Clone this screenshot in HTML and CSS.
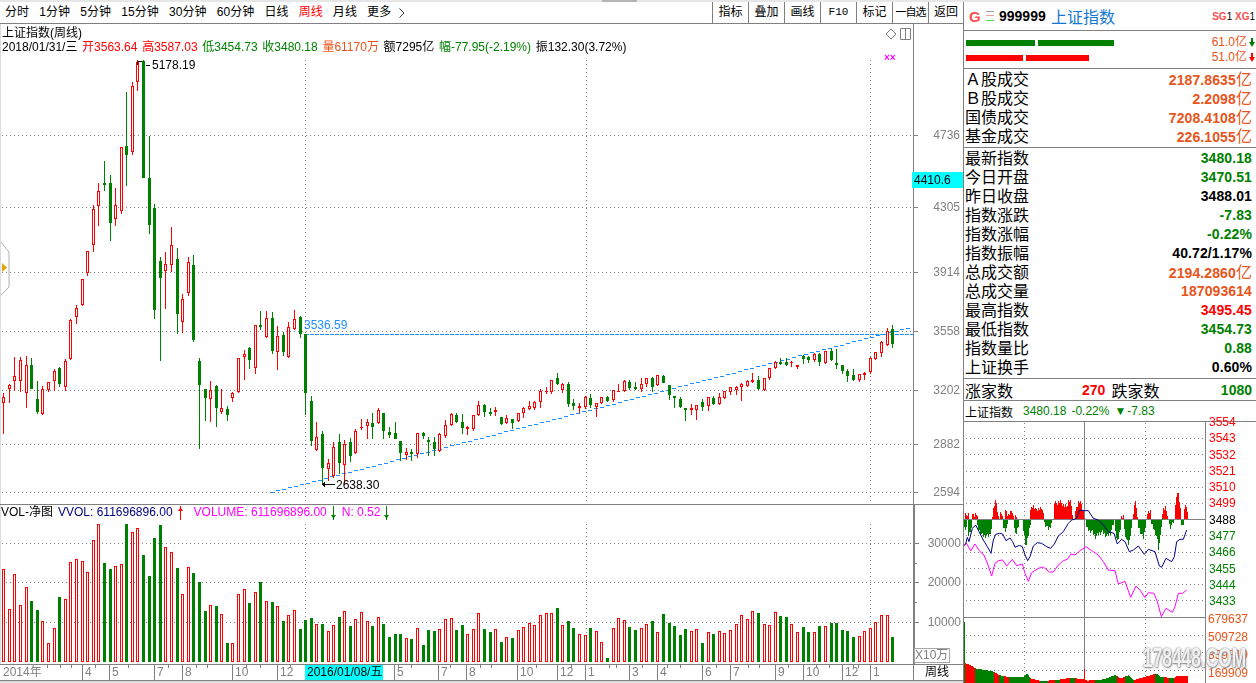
FILE: index.html
```html
<!DOCTYPE html>
<html>
<head>
    <title>上证指数 周线</title>
    <link rel="stylesheet" href="styles.css">
</head>
<body>
    <div class="app">
        <div class="top-thumb"></div>

        <div class="left">
            <div class="toolbar">
                <div class="periods">
                    <span>分时</span>
                    <span>1分钟</span>
                    <span>5分钟</span>
                    <span>15分钟</span>
                    <span>30分钟</span>
                    <span>60分钟</span>
                    <span>日线</span>
                    <span class="active">周线</span>
                    <span>月线</span>
                    <span>更多</span>
                    <svg class="more-arrow" width="6" height="10" viewBox="0 0 6 10"><path d="M0.5 0.5L5 5L0.5 9.5" /></svg>
                </div>
                <div class="tools">
                    <span class="tool">指标</span>
                    <span class="tool">叠加</span>
                    <span class="tool">画线</span>
                    <span class="tool tool-mono">F10</span>
                    <span class="tool">标记</span>
                    <span class="tool tool-tight">一自选</span>
                    <span class="tool">返回</span>
                </div>
            </div>

            <div class="pane price-pane">
                <canvas id="priceCanvas" width="963" height="480"></canvas>
                <div class="chart-head">
                    <div>上证指数(周线)</div>
                    <div class="quote">
                        <span>2018/01/31/三</span>
                        <span class="red">开3563.64</span>
                        <span class="red">高3587.03</span>
                        <span class="green">低3454.73</span>
                        <span class="green">收3480.18</span>
                        <span class="orange">量61170万</span>
                        <span>额7295亿</span>
                        <span class="green">幅-77.95(-2.19%)</span>
                        <span>振132.30(3.72%)</span>
                    </div>
                </div>
                <svg class="mark-diamond" width="12" height="12" viewBox="0 0 12 12"><path d="M6 1L11 6L6 11L1 6Z" /></svg>
                <svg class="mark-split" width="11" height="12" viewBox="0 0 11 12"><path d="M0.5 0.5H10.5V11.5H0.5ZM5.5 0.5V11.5" /></svg>
                <span class="mark-cross">××</span>
                <span class="note note-high" style="left:152px;top:34px">5178.19</span>
                <span class="note" style="left:336px;top:454px">2638.30</span>
                <span class="note note-blue" style="left:304px;top:294px">3536.59</span>
                <span class="axis-label" style="top:104px">4736</span>
                <span class="axis-label" style="top:176px">4305</span>
                <span class="axis-label" style="top:241px">3914</span>
                <span class="axis-label" style="top:300px">3558</span>
                <span class="axis-label" style="top:359px">3202</span>
                <span class="axis-label" style="top:413px">2882</span>
                <span class="axis-label" style="top:461px">2594</span>
                <span class="cursor-price">4410.6</span>
            </div>

            <div class="pane vol-pane">
                <canvas id="volCanvas" width="963" height="159"></canvas>
                <div class="vol-head">
                    <span class="vol-name">VOL-净图</span>
                    <span class="navy">VVOL: 611696896.00</span>
                    <svg class="arrow arrow-a" width="5" height="14" viewBox="0 0 5 14"><path class="fill-red" d="M2 0H3V2L5 5H3V14H2V5H0L2 2Z" /></svg>
                    <span class="magenta vol-b">VOLUME: 611696896.00</span>
                    <svg class="arrow arrow-b" width="5" height="14" viewBox="0 0 5 14"><path class="fill-green" d="M2 0H3V9H5L3 12V14H2V12L0 9H2Z" /></svg>
                    <span class="magenta vol-c">N: 0.52</span>
                    <svg class="arrow arrow-b" width="5" height="14" viewBox="0 0 5 14"><path class="fill-green" d="M2 0H3V9H5L3 12V14H2V12L0 9H2Z" /></svg>
                </div>
                <span class="axis-label vol-label" style="top:31px">30000</span>
                <span class="axis-label vol-label" style="top:70px">20000</span>
                <span class="axis-label vol-label" style="top:110px">10000</span>
                <span class="unit-box">X10万</span>
            </div>

            <div class="time-axis" id="timeAxis">
                <span class="tick tick-first">2014年</span>
                <span class="tick" style="left:82px">4</span>
                <span class="tick" style="left:109px">5</span>
                <span class="tick" style="left:154px">7</span>
                <span class="tick" style="left:182px">8</span>
                <span class="tick" style="left:232px">10</span>
                <span class="tick" style="left:277px">12</span>
                <span class="tick" style="left:394px">5</span>
                <span class="tick" style="left:438px">7</span>
                <span class="tick" style="left:466px">8</span>
                <span class="tick" style="left:517px">10</span>
                <span class="tick" style="left:557px">12</span>
                <span class="tick" style="left:585px">1</span>
                <span class="tick" style="left:629px">3</span>
                <span class="tick" style="left:657px">4</span>
                <span class="tick" style="left:702px">6</span>
                <span class="tick" style="left:730px">7</span>
                <span class="tick" style="left:775px">9</span>
                <span class="tick" style="left:803px">10</span>
                <span class="tick" style="left:842px">12</span>
                <span class="tick" style="left:870px">1</span>
                <span class="cursor-date">2016/01/08/五</span>
                <span class="tick tick-period">周线</span>
            </div>
            <div class="bottom-tabs"></div>
        </div>

        <div class="side">
            <div class="side-head">
                <span class="logo-g">G</span>
                <svg class="logo-lines" width="8" height="10" viewBox="0 0 8 10">
                    <rect class="line-gray" x="0" y="0" width="8" height="1" />
                    <rect class="line-pink" x="0" y="4" width="8" height="1" />
                    <rect class="line-lime" x="0" y="9" width="8" height="1" />
                </svg>
                <span class="code">999999</span>
                <span class="index-name">上证指数</span>
                <span class="flags"><b>SG</b>1 <b>XG</b>1</span>
            </div>

            <div class="flow-bars">
                <div class="flow-row">
                    <div class="bar bar-green bar-a"></div>
                    <div class="bar bar-green bar-b"></div>
                    <span class="flow-value">61.0亿</span>
                    <svg class="flow-arrow" width="6" height="9" viewBox="0 0 6 9"><path class="fill-green" d="M2 0H4V4H6L3 9L0 4H2Z" /></svg>
                </div>
                <div class="flow-row">
                    <div class="bar bar-red bar-c"></div>
                    <div class="bar bar-red bar-d"></div>
                    <span class="flow-value">51.0亿</span>
                    <svg class="flow-arrow" width="6" height="9" viewBox="0 0 6 9"><path class="fill-red" d="M2 0H4V4H6L3 9L0 4H2Z" /></svg>
                </div>
            </div>

            <div class="stats">
                <div class="stat"><span>Ａ股成交</span><b class="orange">2187.8635<i>亿</i></b></div>
                <div class="stat"><span>Ｂ股成交</span><b class="orange">2.2098<i>亿</i></b></div>
                <div class="stat"><span>国债成交</span><b class="orange">7208.4108<i>亿</i></b></div>
                <div class="stat"><span>基金成交</span><b class="orange">226.1055<i>亿</i></b></div>
            </div>

            <div class="stats stats-long">
                <div class="stat"><span>最新指数</span><b class="green">3480.18</b></div>
                <div class="stat"><span>今日开盘</span><b class="green">3470.51</b></div>
                <div class="stat"><span>昨日收盘</span><b>3488.01</b></div>
                <div class="stat"><span>指数涨跌</span><b class="green">-7.83</b></div>
                <div class="stat"><span>指数涨幅</span><b class="green">-0.22%</b></div>
                <div class="stat"><span>指数振幅</span><b>40.72/1.17%</b></div>
                <div class="stat"><span>总成交额</span><b class="orange">2194.2860<i>亿</i></b></div>
                <div class="stat"><span>总成交量</span><b class="orange">187093614</b></div>
                <div class="stat"><span>最高指数</span><b class="red">3495.45</b></div>
                <div class="stat"><span>最低指数</span><b class="green">3454.73</b></div>
                <div class="stat"><span>指数量比</span><b class="green">0.88</b></div>
                <div class="stat"><span>上证换手</span><b>0.60%</b></div>
            </div>

            <div class="breadth">
                <span>涨家数</span>
                <b class="red breadth-up">270</b>
                <span class="breadth-down">跌家数</span>
                <b class="green breadth-num">1080</b>
            </div>

            <div class="mini-head">
                <span>上证指数</span>
                <span class="green mini-price">3480.18</span>
                <span class="green">-0.22%</span>
                <span class="green"><i class="mini-tri">▼</i>-7.83</span>
            </div>

            <div class="mini">
                <canvas id="miniCanvas" width="292" height="261"></canvas>
                <div class="mini-scale">
                    <span class="red">3554</span>
                    <span class="red">3543</span>
                    <span class="red">3532</span>
                    <span class="red">3521</span>
                    <span class="red">3510</span>
                    <span class="red">3499</span>
                    <span>3488</span>
                    <span class="green">3477</span>
                    <span class="green">3466</span>
                    <span class="green">3455</span>
                    <span class="green">3444</span>
                    <span class="green">3433</span>
                    <span class="orange vol-step">679637</span>
                    <span class="orange vol-step">509728</span>
                    <span class="orange vol-step">339819</span>
                    <span class="orange vol-step">169909</span>
                </div>
                <span class="watermark">178448.COM</span>
            </div>
        </div>
    </div>

    <script src="chart.js"></script>
</body>
</html>
```
FILE: styles.css
```css
* {
    box-sizing: border-box;
}
html, body {
    margin: 0;
    height: 683px;
    overflow: hidden;
    background: white;
}
body {
    font-family: "Liberation Sans", "Noto Sans CJK SC", sans-serif;
    font-size: 12px;
    color: #000;
}
canvas {
    display: block;
}
.red { color: #ff0000; }
.green { color: #008000; }
.orange { color: #e8541a; }
.navy { color: #000080; }
.magenta { color: #ff00ff; }
.fill-red { fill: #ff0000; }
.fill-green { fill: #008000; }

.app {
    position: relative;
    display: flex;
    height: 683px;
    border-top: 2px solid #e6e6e6;
}
.top-thumb {
    position: absolute;
    top: -2px;
    left: 602px;
    width: 35px;
    height: 2px;
    background: #b4b4b4;
}
.left {
    width: 963px;
    flex: none;
}

/* toolbar */
.toolbar {
    display: flex;
    justify-content: space-between;
    height: 22px;
    line-height: 21px;
    border-bottom: 1px solid #808080;
}
.periods {
    display: flex;
    align-items: center;
    gap: 10px;
    padding-left: 5px;
    letter-spacing: 0.1px;
}
.periods .active {
    color: #ff0000;
}
.more-arrow {
    margin-left: -2px;
}
.more-arrow path {
    fill: none;
    stroke: #333;
}
.tools {
    display: flex;
}
.tool {
    width: 36px;
    border-left: 1px solid #808080;
    text-align: center;
    white-space: nowrap;
}
.tool:last-child {
    width: 35px;
}
.tool-mono {
    font-family: "Liberation Mono", monospace;
    font-size: 11px;
}
.tool-tight {
    font-size: 11px;
    letter-spacing: -1px;
}

/* chart panes */
.pane {
    position: relative;
    border-bottom: 1px solid #808080;
}
.price-pane {
    height: 481px;
}
.vol-pane {
    height: 160px;
}
.chart-head {
    position: absolute;
    top: 2px;
    left: 2px;
    line-height: 14px;
}
.quote {
    display: flex;
    gap: 4.7px;
    white-space: nowrap;
}
.mark-diamond {
    position: absolute;
    top: 4px;
    left: 885px;
}
.mark-diamond path,
.mark-split path {
    fill: none;
    stroke: #808080;
}
.mark-split {
    position: absolute;
    top: 4px;
    left: 900px;
}
.mark-cross {
    position: absolute;
    top: 28px;
    left: 884px;
    color: #ff00ff;
    font-size: 10px;
    font-weight: bold;
    line-height: 12px;
}
.note {
    position: absolute;
    line-height: 14px;
}
.note-blue {
    color: #1e8fff;
}
.axis-label {
    position: absolute;
    right: 3px;
    color: #808080;
    line-height: 14px;
}
.vol-label {
    right: 2px;
}
.cursor-price {
    position: absolute;
    top: 148px;
    left: 912px;
    width: 51px;
    height: 16px;
    padding-left: 2px;
    background: #00ffff;
    line-height: 16px;
}
.vol-head {
    position: absolute;
    top: 0;
    left: 1px;
    display: flex;
    height: 15px;
    line-height: 15px;
    white-space: nowrap;
}
.vol-name {
    margin-right: 5px;
}
.arrow {
    flex: none;
    margin-top: 1px;
}
.arrow-a {
    margin-left: 5px;
}
.arrow-b {
    margin-left: 4px;
}
.vol-b {
    margin-left: 11px;
}
.vol-c {
    margin-left: 6px;
}
.unit-box {
    position: absolute;
    top: 143px;
    left: 914px;
    width: 36px;
    height: 15px;
    border: 1px solid #a8a8a8;
    color: #808080;
    line-height: 13px;
    white-space: nowrap;
}

/* time axis */
.time-axis {
    position: relative;
    height: 16px;
    border-bottom: 1px solid #808080;
    line-height: 15px;
    color: #808080;
    overflow: hidden;
}
.tick {
    position: absolute;
    top: 0;
    height: 15px;
    padding-left: 2px;
    border-left: 1px solid #808080;
}
.tick-first {
    left: 1px;
    border-left: none;
}
.tick-period {
    left: 913px;
    width: 50px;
    padding-left: 11px;
    color: #000;
    background: white;
}
.minor {
    position: absolute;
    top: 0;
    width: 1px;
    height: 3px;
    background: #808080;
}
.cursor-date {
    position: absolute;
    top: 0;
    left: 305px;
    width: 78px;
    height: 15px;
    padding-left: 2px;
    background: #00ffff;
    color: #000;
}
.bottom-tabs {
    height: 2px;
    background: #dcdcdc;
}

/* right panel */
.side {
    flex: none;
    width: 293px;
    border-left: 1px solid #808080;
}
.side-head {
    position: relative;
    display: flex;
    align-items: center;
    height: 29px;
    padding-left: 5px;
    border-bottom: 1px solid #808080;
}
.logo-g {
    width: 17px;
    color: #f85050;
    font-size: 15px;
    font-weight: bold;
}
.logo-lines {
    margin-right: 5px;
}
.line-gray { fill: #a0a0a0; }
.line-pink { fill: #f0a0a0; }
.line-lime { fill: #40e040; }
.code {
    width: 52px;
    font-size: 14px;
    font-weight: bold;
}
.index-name {
    color: #1478d2;
    font-size: 16px;
}
.flags {
    position: absolute;
    top: 9px;
    right: 1px;
    font-size: 10px;
    line-height: 12px;
}
.flags b {
    color: #f85050;
}
.flow-bars {
    height: 38px;
    padding-top: 4px;
    border-bottom: 1px solid #808080;
}
.flow-row {
    display: flex;
    align-items: center;
    gap: 3px;
    height: 15px;
    padding-left: 2px;
    padding-right: 1px;
}
.bar {
    height: 6px;
}
.bar-green { background: #008000; }
.bar-red { background: #ff0000; }
.bar-a { width: 69px; }
.bar-b { width: 76px; }
.bar-c { width: 57px; }
.bar-d { width: 63px; }
.flow-value {
    margin-left: auto;
    color: #e8541a;
    line-height: 15px;
}
.flow-arrow {
    margin-left: -1px;
}
.stats {
    padding: 1px 4px 1px 1px;
    border-bottom: 1px solid #808080;
}
.stats-long {
    height: 231px;
}
.stat {
    display: flex;
    justify-content: space-between;
    height: 19px;
    font-size: 16px;
    line-height: 19px;
    white-space: nowrap;
}
.stat b {
    font-size: 14px;
    letter-spacing: 0.1px;
}
.stat i {
    font-size: 16px;
    font-style: normal;
    font-weight: normal;
}
.breadth {
    display: flex;
    align-items: center;
    height: 22px;
    padding: 0 4px 0 1px;
    border-bottom: 1px solid #808080;
    font-size: 16px;
}
.breadth b {
    font-size: 14px;
}
.breadth-up {
    margin-left: 69px;
}
.breadth-down {
    margin-left: 6px;
}
.breadth-num {
    margin-left: auto;
}
.mini-head {
    display: flex;
    align-items: center;
    gap: 5px;
    height: 21px;
    padding-left: 1px;
    border-bottom: 1px solid #808080;
}
.mini-price {
    margin-left: 5px;
}
.mini-tri {
    margin-right: 1px;
    font-size: 12px;
    font-style: normal;
}
.mini {
    position: relative;
    height: 261px;
}
.mini-scale {
    position: absolute;
    top: -8px;
    left: 245px;
    display: flex;
    flex-direction: column;
}
.mini-scale span {
    height: 16.3px;
    line-height: 16.3px;
}
.mini-scale .vol-step {
    height: 18px;
    line-height: 18px;
    margin-left: -1px;
}
.watermark {
    position: absolute;
    top: 222px;
    left: 179px;
    color: rgba(248, 248, 248, 0.92);
    font-size: 28px;
    font-weight: bold;
    line-height: 28px;
    white-space: nowrap;
    transform: scaleX(0.62);
    transform-origin: left top;
    text-shadow: 1px 1px 2px #8a8a8a, -1px 0 2px #b0b0b0, 0 0 3px #a0a0a0;
}
```
FILE: chart.js
```js
// Weekly candles: [high, body top, body bottom, low, up], values are screen y
const candles = [
    [393,397,403,433,1],[384,385,389,402,1],[357,376,381,390,1],[357,360,381,391,1],[356,365,393,407,1],
    [358,365,388,388,0],[381,399,411,413,0],[386,389,414,414,1],[382,382,390,391,1],[369,371,381,390,1],
    [367,368,383,386,0],[359,361,387,390,1],[319,320,359,359,1],[305,308,317,323,1],[279,279,305,305,1],
    [251,251,273,275,1],[205,209,245,251,1],[183,191,206,225,1],[161,183,184,190,0],[175,183,222,240,0],
    [188,205,219,225,1],[147,147,211,213,1],[92,146,154,185,0],[82,86,152,154,1],[60,62,82,90,1],
    [60,61,177,177,0],[136,178,224,233,0],[204,208,309,318,0],[257,261,277,360,0],[252,264,271,308,1],
    [227,245,265,271,1],[248,259,313,333,0],[294,299,322,332,1],[257,262,293,295,1],[255,265,339,341,0],
    [358,361,384,448,0],[389,389,397,420,0],[381,390,399,421,1],[385,386,407,426,0],[389,408,412,413,1],
    [406,409,414,420,0],[392,393,398,401,1],[358,358,392,392,1],[350,354,357,379,1],[347,348,359,368,0],
    [325,325,368,373,1],[311,325,326,329,0],[311,318,337,337,1],[312,318,350,353,0],[326,336,352,369,1],
    [332,335,351,355,0],[322,327,357,357,1],[310,319,329,329,1],[316,317,333,337,0],[334,334,392,414,0],
    [396,401,440,445,0],[422,437,450,450,1],[431,434,467,483,0],[459,463,469,480,1],[442,447,476,477,1],
    [434,442,462,473,0],[440,444,465,483,1],[438,442,455,461,0],[429,431,453,453,1],[419,427,428,429,1],
    [419,422,426,438,1],[413,423,426,438,0],[408,410,423,423,1],[413,413,430,438,0],[427,432,434,437,0],
    [422,433,438,438,0],[441,441,452,460,0],[448,452,455,459,1],[449,452,453,460,0],[433,433,454,457,1],
    [432,433,435,438,0],[437,440,441,455,0],[437,442,448,455,0],[433,434,451,451,1],[420,425,436,437,1],
    [413,414,425,425,1],[413,415,421,422,0],[414,422,427,433,0],[426,427,429,434,1],[415,415,429,430,1],
    [401,405,415,415,1],[404,405,411,416,0],[408,412,413,415,0],[407,410,412,415,1],[417,417,423,424,0],
    [415,418,423,423,1],[419,419,422,428,0],[413,413,421,421,1],[407,408,413,417,1],[401,406,409,409,1],
    [401,402,408,409,1],[389,391,402,407,1],[387,391,392,393,1],[380,380,392,393,1],[373,378,383,384,0],
    [383,384,390,392,1],[382,384,403,406,0],[399,403,405,409,0],[403,406,408,412,1],[396,397,407,408,1],
    [394,398,404,407,0],[403,403,407,416,1],[397,397,403,403,1],[396,397,400,401,0],[390,390,400,401,1],
    [384,391,391,391,1],[380,381,391,391,1],[380,382,387,389,0],[382,387,388,389,0],[378,384,389,391,1],
    [378,378,384,386,1],[377,378,386,391,0],[375,375,385,385,1],[375,376,382,382,0],[385,385,394,399,0],
    [396,396,397,407,0],[397,399,406,407,0],[408,408,409,420,0],[404,408,410,414,1],[405,405,410,419,1],
    [399,402,406,410,0],[397,397,406,410,1],[396,398,403,404,0],[393,397,404,404,1],[391,391,398,398,1],
    [387,387,392,394,1],[386,387,390,394,1],[383,384,387,400,1],[380,381,386,386,1],[373,380,382,382,1],
    [376,380,388,389,0],[378,378,390,390,1],[368,368,378,379,1],[361,362,368,368,1],[358,362,363,364,0],
    [358,362,364,365,0],[361,362,363,366,1],[365,365,367,368,1],[355,356,358,363,0],[356,357,359,362,0],
    [353,354,360,361,1],[353,354,361,365,0],[351,351,363,363,1],[348,351,359,360,0],[349,363,363,368,0],
    [365,365,370,373,0],[369,371,375,381,0],[369,375,379,380,0],[374,374,380,381,1],[372,373,375,379,1],
    [357,358,372,373,1],[352,352,359,359,1],[341,342,353,356,1],[328,331,345,345,1],[325,329,343,347,0]
];

// Volume bar tops, measured in thirds of a pixel below y=495
const volTops = [
    223,343,238,331,277,318,345,379,445,400,306,313,202,193,199,232,136,88,204,222,
    214,208,88,112,100,181,243,129,90,157,172,219,298,217,234,262,348,331,333,358,
    445,445,298,283,324,292,262,319,322,334,378,361,346,402,375,369,388,387,409,391,
    366,349,393,373,352,379,393,367,387,426,417,417,430,432,400,450,405,408,403,373,
    370,405,390,418,403,355,402,411,403,441,427,429,406,397,385,390,361,355,355,339,
    391,378,399,418,421,399,409,441,489,400,370,376,396,405,400,388,378,412,357,384,
    393,420,402,409,403,444,412,417,409,415,406,388,361,373,349,354,388,391,352,363,
    366,388,412,396,411,411,393,394,384,384,405,408,426,424,409,400,382,361,361,426
];
const volUp = "1111100111" + "0111111100" + "1101100001" + "1011000101" + "0111010101" +
    "0110001011" + "0101110100" + "0010100011" + "1001110010" + "1011111110" +
    "1001101101" + "1100110100" + "0001101011" + "1111101110" + "0110010100" + "0001111110";

const GRAY = "#808080";
const RED = "#ff0000";
const GREEN = "#008000";
const BLUE = "#1e8fff";

function barX(i) {
    return Math.round(3.3 + 5.59 * i);
}

function rect(ctx, x, y, w, h, color) {
    ctx.fillStyle = color;
    ctx.fillRect(x, y, w, h);
}

function dottedH(ctx, y, x1, x2) {
    for (let x = x1; x < x2; x += 4) rect(ctx, x, y, 1, 1, GRAY);
}

function dottedV(ctx, x, y1, y2) {
    for (let y = y1; y < y2; y += 4) rect(ctx, x, y, 1, 1, GRAY);
}

function drawPrice() {
    const ctx = document.getElementById("priceCanvas").getContext("2d");
    ctx.translate(0, -24);
    rect(ctx, 0, 24, 1, 480, "#dcdcdc");

    [135, 207, 272, 331, 390, 444, 492].forEach(y => {
        dottedH(ctx, y, 2, 913);
        rect(ctx, 913, y, 5, 1, GRAY);
    });
    [305, 586, 870].forEach(x => dottedV(ctx, x, 60, 504));
    rect(ctx, 913, 24, 1, 480, GRAY);

    // slanted trend line: short flat dashes stepping upwards
    for (let x = 270; x < 910; x += 6) {
        rect(ctx, x, Math.round(492 - (x - 270) * 0.2586), 4, 1, BLUE);
    }
    // level line
    for (let x = 305; x < 913; x += 5) {
        rect(ctx, x, 334, 4, 1, BLUE);
    }

    candles.forEach((c, i) => {
        const x = barX(i);
        const color = c[4] ? RED : GREEN;
        rect(ctx, x, c[0], 1, c[3] - c[0] + 1, color);
        rect(ctx, x - 1, c[1], 3, Math.max(c[2] - c[1], 1) + (c[4] ? 0 : 1), color);
        if (c[4] && c[2] - c[1] > 1) rect(ctx, x, c[1] + 1, 1, c[2] - c[1] - 2, "white");
    });

    // high and low markers
    rect(ctx, 146, 65, 4, 1, "#000");
    rect(ctx, 322, 484, 13, 1, "#000");
    rect(ctx, 323, 483, 1, 3, "#000");
    rect(ctx, 324, 482, 1, 5, "#000");
    rect(ctx, 138, 61, 4, 1, "#000");
    rect(ctx, 137, 62, 1, 3, "#000");

    // collapse handle on the left edge
    ctx.strokeStyle = "#b0b0b0";
    ctx.beginPath();
    ctx.moveTo(1, 242);
    ctx.lineTo(9, 252);
    ctx.lineTo(9, 287);
    ctx.lineTo(1, 295);
    ctx.stroke();
    ctx.fillStyle = "#e8a010";
    ctx.beginPath();
    ctx.moveTo(2, 263);
    ctx.lineTo(7, 267.5);
    ctx.lineTo(2, 272);
    ctx.fill();
}

function drawVolume() {
    const ctx = document.getElementById("volCanvas").getContext("2d");
    ctx.translate(0, -505);
    rect(ctx, 0, 505, 1, 159, "#dcdcdc");

    [543, 582, 622].forEach(y => {
        dottedH(ctx, y, 2, 913);
        rect(ctx, 913, y, 6, 1, GRAY);
    });
    [563, 602].forEach(y => rect(ctx, 913, y, 4, 1, GRAY));
    [305, 586, 870].forEach(x => dottedV(ctx, x, 524, 662));
    rect(ctx, 913, 505, 2, 159, GRAY);

    volTops.forEach((t, i) => {
        const x = barX(i);
        const top = Math.round(495 + t / 3);
        if (volUp[i] === "1") {
            rect(ctx, x - 1, top, 3, 662 - top, RED);
            rect(ctx, x, top + 1, 1, 660 - top, "white");
        } else {
            rect(ctx, x - 1, top, 3, 662 - top, GREEN);
        }
    });
}

function drawTicks() {
    const axis = document.getElementById("timeAxis");
    [47, 60, 71, 95, 128, 168, 196, 207, 246, 260, 290, 398, 411, 450, 480, 491, 536, 571, 609,
     616, 642, 667, 680, 716, 748, 759, 788, 816, 829, 853, 858].forEach(x => {
        const tick = document.createElement("i");
        tick.className = "minor";
        tick.style.left = x + "px";
        axis.insertBefore(tick, axis.firstChild);
    });
}

// The intraday panel was read off a 3x enlargement, so its points stay in
// those units: screen x = 960 + zx / 3, screen y = 420 + zy / 3.
const navyLine = [
    [10,378],[17,372],[22,352],[27,365],[37,325],[47,315],[57,335],[70,360],[82,380],[93,400],
    [100,360],[107,343],[118,340],[128,342],[138,362],[150,354],[158,365],[165,382],[178,376],[187,380],
    [195,405],[203,422],[210,410],[220,378],[232,368],[245,370],[260,380],[272,385],[283,372],[295,348],
    [310,335],[325,310],[335,300],[350,295],[358,270],[372,272],[385,272],[400,295],[415,300],[430,315],
    [445,335],[462,340],[472,372],[485,358],[495,365],[508,395],[520,390],[535,378],[553,403],[565,388],
    [585,395],[598,438],[605,442],[618,415],[635,425],[643,410],[650,365],[660,358],[670,358],[680,330]
];
const pinkLine = [
    [10,378],[20,370],[32,393],[45,372],[60,395],[72,405],[83,432],[95,468],[105,430],[115,422],
    [128,420],[140,438],[157,418],[170,437],[187,432],[195,460],[205,484],[215,458],[235,445],[250,441],
    [268,456],[280,456],[295,435],[310,422],[322,418],[333,402],[345,405],[360,392],[378,380],[395,392],
    [415,405],[430,425],[445,450],[465,452],[475,492],[495,484],[512,532],[528,498],[540,510],[555,533],
    [565,518],[582,520],[592,545],[604,590],[618,565],[637,577],[645,560],[655,520],[668,520],[680,510]
];
const redAreas = [
    [[15,285],[24,282]],
    [[36,275],[40,290],[44,285],[52,282]],
    [[96,285],[98,270],[103,250],[107,243],[110,265],[114,290]],
    [[120,283],[128,283]],
    [[135,275],[138,272],[142,285],[150,280],[155,268],[159,290]],
    [[165,290],[172,292]],
    [[210,275],[212,262],[218,255],[225,270],[232,265],[240,268],[247,265],[250,290]],
    [[280,260],[282,250],[290,248],[300,245],[310,255],[318,262],[325,240],[332,250],[336,280]],
    [[345,280],[348,262],[355,245],[362,250],[368,270],[372,290]],
    [[482,288],[490,288]],
    [[519,285],[523,240],[527,258],[531,285]],
    [[560,277],[570,277]],
    [[606,275],[608,268],[615,265],[622,285]],
    [[644,270],[650,210],[655,225],[661,280]],
    [[672,265],[680,258],[683,295]]
];
const greenAreas = [
    [[12,325],[18,322]],
    [[24,345],[34,320]],
    [[50,320],[60,340],[70,350],[78,345],[85,350],[95,320]],
    [[128,318],[134,332],[141,318]],
    [[160,320],[168,342],[175,315]],
    [[188,325],[197,380],[205,340],[210,310]],
    [[250,305],[255,315],[265,328],[275,305]],
    [[378,320],[382,330],[395,335],[405,350],[415,340],[425,335],[440,350],[450,340],[460,310]],
    [[464,320],[470,370],[478,335],[482,310]],
    [[490,320],[497,355],[505,375],[512,330],[516,305]],
    [[534,320],[540,335],[550,355],[556,310]],
    [[572,310],[578,320],[590,355],[595,395],[600,340],[606,300]],
    [[625,310],[630,320],[640,305]],
    [[663,315],[666,322],[671,305]]
];
const miniVolume = [
    [15,730],[30,735],[45,745],[75,750],[100,755],[115,765],[150,772],[190,770],[200,760],[210,775],
    [240,783],[290,780],[330,773],[368,778],[380,782],[430,778],[465,765],[480,775],[505,765],[520,780],
    [590,760],[600,770],[640,775],[650,768],[680,768]
];
const miniGreenSpans = [[45,100],[115,130],[145,190],[190,210],[240,262],[285,300],[330,345],[405,470],[495,520],[585,610],[625,640]];

function at(points, zx) {
    for (let k = 1; k < points.length; k++) {
        if (zx <= points[k][0]) {
            const a = points[k - 1];
            const b = points[k];
            return a[1] + (b[1] - a[1]) * (zx - a[0]) / (b[0] - a[0]);
        }
    }
    return points[points.length - 1][1];
}

function drawLine(ctx, points, color) {
    ctx.strokeStyle = color;
    ctx.beginPath();
    points.forEach((p, i) => {
        const x = 960 + p[0] / 3;
        const y = 420 + p[1] / 3;
        if (i === 0) ctx.moveTo(x, y); else ctx.lineTo(x, y);
    });
    ctx.stroke();
}

function drawMini() {
    const ctx = document.getElementById("miniCanvas").getContext("2d");
    ctx.translate(-964, -422);

    [438, 454, 471, 487, 503, 535, 552, 568, 584, 600, 635, 652, 670].forEach(y => dottedH(ctx, y, 966, 1205));
    [1024, 1145].forEach(x => dottedV(ctx, x, 423, 683));
    rect(ctx, 964, 519, 242, 1, GRAY);
    rect(ctx, 964, 617, 242, 1, GRAY);
    rect(ctx, 1084, 422, 1, 261, GRAY);
    rect(ctx, 1205, 422, 1, 261, GRAY);

    // net flow columns around the previous close
    const column = (areas, color) => areas.forEach(points => {
        const first = Math.ceil(points[0][0] / 3);
        const last = Math.floor(points[points.length - 1][0] / 3);
        for (let p = first; p <= last; p++) {
            const jitter = (p * 7) % 5 - 2;
            const y = Math.round(420 + at(points, p * 3) / 3) + (color === RED ? jitter : -jitter);
            if (color === RED) rect(ctx, 960 + p, y, 1, 519 - y, color);
            else rect(ctx, 960 + p, 520, 1, y - 520, color);
        }
    });
    column(redAreas, RED);
    column(greenAreas, GREEN);

    // intraday volume
    for (let p = 5; p <= 227; p++) {
        const zx = p * 3;
        const y = Math.round(420 + at(miniVolume, zx) / 3);
        const isGreen = miniGreenSpans.some(s => zx >= s[0] && zx < s[1]);
        rect(ctx, 960 + p, y, 1, 683 - y, isGreen ? GREEN : RED);
    }
    rect(ctx, 964, 622, 1, 61, GREEN);
    rect(ctx, 1084, 669, 1, 14, RED);

    drawLine(ctx, pinkLine, "#ff00ff");
    drawLine(ctx, navyLine, "#000080");
}

drawPrice();
drawVolume();
drawTicks();
drawMini();
```
